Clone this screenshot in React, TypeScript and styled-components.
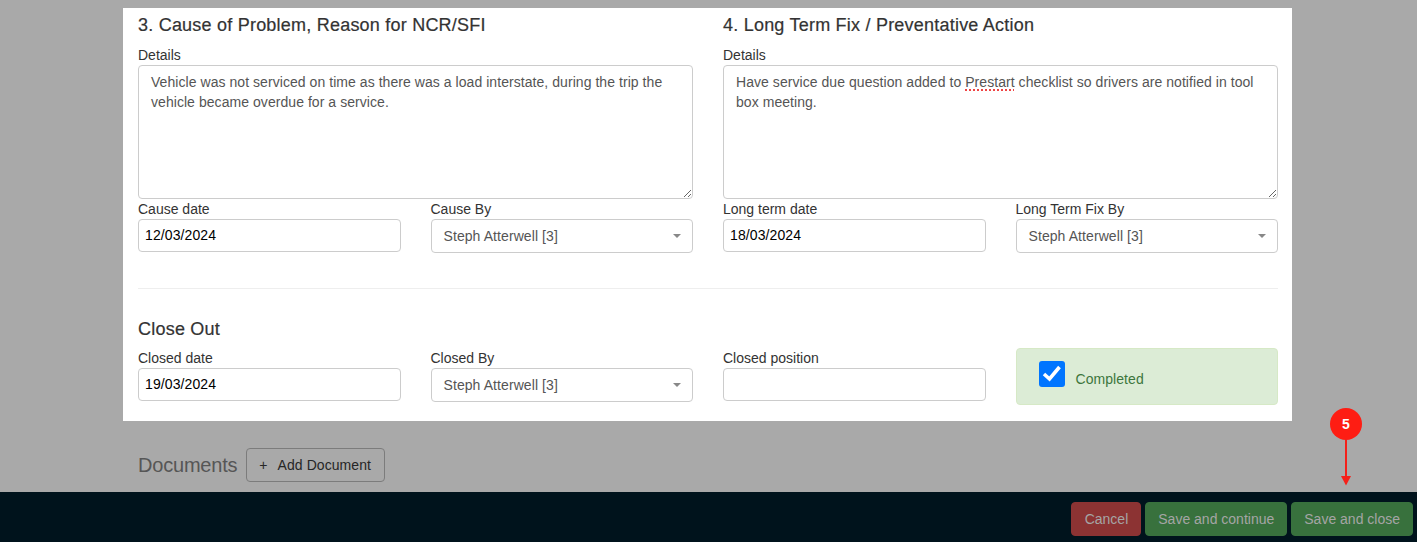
import React from 'react'
import styled, { createGlobalStyle } from 'styled-components'

const GlobalStyle = createGlobalStyle`
    html, body {
        margin: 0;
        height: 100%;
        background: #a9a9a9;
        font-family: "Liberation Sans", Arial, sans-serif;
        font-size: 14px;
        color: #333;
    }
    * {
        box-sizing: border-box;
    }
`

const StaffSelect = ({ value }: { value: string }) => (
    <SelectBox>
        <span>{value}</span>
        <Caret />
    </SelectBox>
)

const App = () => {
    return (
        <>
            <GlobalStyle />
            <Page>
                <Main>
                    <Panel>
                        <TwoColumns>
                            <section>
                                <SectionTitle>3. Cause of Problem, Reason for NCR/SFI</SectionTitle>
                                <DetailsLabel>Details</DetailsLabel>
                                <DetailsArea>
                                    Vehicle was not serviced on time as there was a load interstate, during the trip the vehicle became overdue for a service.
                                </DetailsArea>
                                <SubColumns>
                                    <Field>
                                        <FieldLabel>Cause date</FieldLabel>
                                        <DateInput readOnly value="12/03/2024" />
                                    </Field>
                                    <Field>
                                        <FieldLabel>Cause By</FieldLabel>
                                        <StaffSelect value="Steph Atterwell [3]" />
                                    </Field>
                                </SubColumns>
                            </section>
                            <section>
                                <SectionTitle>4. Long Term Fix / Preventative Action</SectionTitle>
                                <DetailsLabel>Details</DetailsLabel>
                                <DetailsArea>
                                    Have service due question added to <Misspelt>Prestart</Misspelt> checklist so drivers are notified in tool box meeting.
                                </DetailsArea>
                                <SubColumns>
                                    <Field>
                                        <FieldLabel>Long term date</FieldLabel>
                                        <DateInput readOnly value="18/03/2024" />
                                    </Field>
                                    <Field>
                                        <FieldLabel>Long Term Fix By</FieldLabel>
                                        <StaffSelect value="Steph Atterwell [3]" />
                                    </Field>
                                </SubColumns>
                            </section>
                        </TwoColumns>
                        <Divider />
                        <CloseOutTitle>Close Out</CloseOutTitle>
                        <FourColumns>
                            <Field>
                                <FieldLabel>Closed date</FieldLabel>
                                <DateInput readOnly value="19/03/2024" />
                            </Field>
                            <Field>
                                <FieldLabel>Closed By</FieldLabel>
                                <StaffSelect value="Steph Atterwell [3]" />
                            </Field>
                            <Field>
                                <FieldLabel>Closed position</FieldLabel>
                                <DateInput readOnly value="" />
                            </Field>
                            <CompletedAlert>
                                <CheckBox>
                                    <svg width="26" height="26" viewBox="0 0 26 26">
                                        <path d="M5 13 L10.5 18 L20.5 6" fill="none" stroke="#fff" strokeWidth="3.6" />
                                    </svg>
                                </CheckBox>
                                <CompletedText>Completed</CompletedText>
                            </CompletedAlert>
                        </FourColumns>
                    </Panel>
                    <DocumentsRow>
                        <DocumentsTitle>Documents</DocumentsTitle>
                        <AddButton>
                            <span>+</span>
                            Add Document
                        </AddButton>
                    </DocumentsRow>
                </Main>
                <BottomBar>
                    <BarButton $variant="danger">Cancel</BarButton>
                    <BarButton $variant="success">Save and continue</BarButton>
                    <BarButton $variant="success">Save and close</BarButton>
                </BottomBar>
                <StepMarker>
                    <StepBadge>5</StepBadge>
                    <svg width="10" height="47" viewBox="0 0 10 47">
                        <path d="M5 0 V38" stroke="#f5201a" strokeWidth="2" />
                        <path d="M0 37 H10 L5 46.5 Z" fill="#f5201a" />
                    </svg>
                </StepMarker>
            </Page>
        </>
    )
}

const Page = styled.div`
    position: relative;
    display: flex;
    flex-direction: column;
    height: 100vh;
    overflow: hidden;
`

const Main = styled.main`
    flex: 1;
    width: 1169px;
    margin-left: 123px;
    padding-top: 8px;
`

const Panel = styled.div`
    height: 413px;
    padding: 7px 14px 0 15px;
    background: #fff;
`

const TwoColumns = styled.div`
    display: grid;
    grid-template-columns: 1fr 1fr;
    gap: 30px;
`

const SubColumns = styled.div`
    display: grid;
    grid-template-columns: 1fr 1fr;
    gap: 30px;
`

const FourColumns = styled.div`
    display: grid;
    grid-template-columns: repeat(4, 1fr);
    gap: 30px;
`

const SectionTitle = styled.h4`
    margin: 0;
    font-size: 18px;
    line-height: 20px;
    font-weight: 400;
    letter-spacing: 0.22px;
    color: #333;
    -webkit-text-stroke: 0.2px #333;
`

const CloseOutTitle = styled(SectionTitle)`
    margin: 30px 0 9px;
`

const DetailsLabel = styled.label`
    display: block;
    margin-top: 10px;
    height: 20px;
    line-height: 20px;
    color: #333;
`

const DetailsArea = styled.div`
    height: 134px;
    padding: 6px 12px;
    border: 1px solid #ccc;
    border-radius: 4px;
    line-height: 20px;
    letter-spacing: 0.055px;
    color: #555;
    overflow: auto;
    resize: vertical;
`

const Misspelt = styled.span`
    text-decoration: underline dotted #ef4444 2px;
    text-underline-offset: 2px;
`

const Field = styled.div`
    display: flex;
    flex-direction: column;
    min-width: 0;
`

const FieldLabel = styled.label`
    height: 20px;
    line-height: 20px;
    color: #333;
`

const DateInput = styled.input`
    width: 100%;
    height: 33px;
    padding: 0 6px 2px;
    border: 1px solid #ccc;
    border-radius: 4px;
    background: #fff;
    font-family: inherit;
    font-size: 14px;
    letter-spacing: 0.1px;
    color: #000;
    outline: none;
`

const SelectBox = styled.div`
    display: flex;
    align-items: center;
    justify-content: space-between;
    height: 34px;
    padding: 0 12px;
    border: 1px solid #ccc;
    border-radius: 4px;
    background: #fff;
    letter-spacing: 0.08px;
    color: #555;
`

const Caret = styled.i`
    width: 0;
    height: 0;
    margin-right: -1px;
    border-left: 4px solid transparent;
    border-right: 4px solid transparent;
    border-top: 4px solid #888;
`

const Divider = styled.hr`
    margin: 35px 0 0;
    border: 0;
    border-top: 1px solid #eee;
`

const CompletedAlert = styled.div`
    display: flex;
    align-items: flex-start;
    height: 57px;
    padding: 12px 22px;
    border: 1px solid #d6e9c6;
    border-radius: 4px;
    background: #dcecd6;
`

const CheckBox = styled.span`
    display: block;
    width: 26px;
    height: 26px;
    border-radius: 3px;
    background: #0075ff;
`

const CompletedText = styled.span`
    margin: 8px 0 0 11px;
    line-height: 20px;
    letter-spacing: 0.06px;
    color: #3c763d;
`

const DocumentsRow = styled.div`
    display: flex;
    align-items: center;
    gap: 9px;
    margin-top: 27px;
    padding-left: 15px;
`

const DocumentsTitle = styled.span`
    font-size: 20px;
    letter-spacing: -0.2px;
    color: #565656;
`

const AddButton = styled.button`
    display: flex;
    align-items: center;
    gap: 10px;
    height: 34px;
    padding: 0 13px 0 12px;
    border: 1px solid #7c7c7c;
    border-radius: 4px;
    background: transparent;
    font-family: inherit;
    font-size: 14px;
    letter-spacing: 0.06px;
    color: #262626;
`

const BottomBar = styled.footer`
    display: flex;
    justify-content: flex-end;
    gap: 4px;
    height: 50px;
    padding: 10px 4px 0 0;
    background: #00131c;
`

const BarButton = styled.button<{ $variant: 'danger' | 'success' }>`
    height: 34px;
    padding: 0 12px 0 ${({ $variant }) => ($variant === 'danger' ? '13px' : '12px')};
    border: 1px solid ${({ $variant }) => ($variant === 'danger' ? '#8c3333' : '#38713d')};
    border-radius: 4px;
    background: ${({ $variant }) => ($variant === 'danger' ? '#8c3333' : '#38713d')};
    font-family: inherit;
    font-size: 14px;
    color: #a5a5a5;
`

const StepMarker = styled.div`
    position: absolute;
    left: 1330px;
    top: 408px;
    display: flex;
    flex-direction: column;
    align-items: center;
    width: 32px;
`

const StepBadge = styled.div`
    width: 32px;
    height: 32px;
    margin-bottom: -1px;
    border-radius: 50%;
    background: #fe1d13;
    color: #fff;
    font-size: 14px;
    font-weight: 700;
    line-height: 32px;
    text-align: center;
`

export default App
